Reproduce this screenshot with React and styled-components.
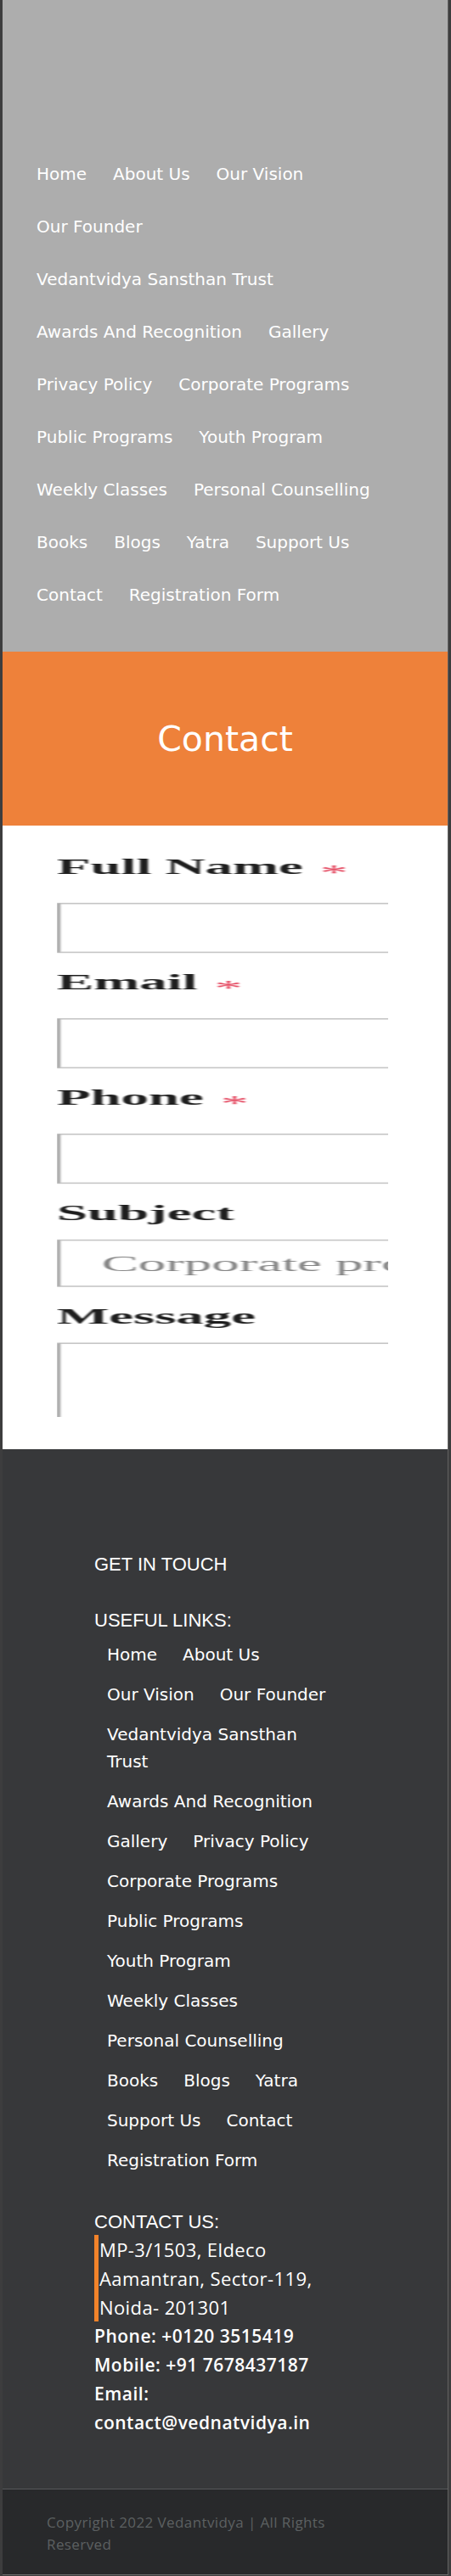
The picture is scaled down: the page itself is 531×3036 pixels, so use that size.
import styled, { createGlobalStyle } from 'styled-components';

const GlobalStyle = createGlobalStyle`
  html, body {
    margin: 0;
    padding: 0;
    background: #3d3d3e;
  }
  * {
    box-sizing: border-box;
  }
`;

const comic = `"DejaVu Sans", Verdana, sans-serif`;

const Page = styled.div`
  margin: 0 3px;
  border-right: 1px solid #626262;
  border-bottom: 1px solid #6c6c6c;
`;

const Header = styled.header`
  background: #adadad;
  padding: 189px 55px 51px 40px;
`;

const LinkList = styled.nav`
  display: flex;
  flex-wrap: wrap;
  column-gap: ${(p) => (p.$compact ? '30px' : '31px')};
  row-gap: ${(p) => (p.$compact ? '15px' : '30px')};
  padding-left: ${(p) => (p.$compact ? '15px' : '0')};
`;

const LinkItem = styled.a`
  font-family: ${comic};
  font-size: 20px;
  line-height: 32px;
  color: #fff;
  text-decoration: none;
`;

const Banner = styled.section`
  height: 205px;
  background: #ee813a;
  display: flex;
  align-items: center;
  justify-content: center;
`;

const BannerTitle = styled.h1`
  margin: 0;
  font-family: ${comic};
  font-weight: normal;
  font-size: 41px;
  color: #fff;
`;

const FormSection = styled.section`
  background: #fff;
  height: 735px;
  padding: 27px 0 0 64px;
`;

const FormClip = styled.div`
  width: 390px;
  height: 670px;
  overflow: hidden;
`;

const ScaledForm = styled.form`
  width: 200px;
  padding-top: 4px;
  transform: scale(4.05, 1.6);
  transform-origin: 0 0;
  filter: blur(0.35px);
`;

const Field = styled.div`
  margin-bottom: ${(p) => (p.$last ? '0' : '12.5px')};
`;

const Label = styled.label`
  display: block;
  font-family: "Liberation Serif", "Times New Roman", serif;
  font-weight: bold;
  font-size: 16px;
  line-height: 20px;
  color: #1e1e1e;
  margin-bottom: ${(p) => (p.$req ? '12px' : '8.5px')};
`;

const Req = styled.span`
  color: #e4465e;
  font-weight: normal;
  margin-left: 5px;
  vertical-align: -4px;
`;

const TextInput = styled.input`
  display: block;
  width: 160px;
  height: 36.5px;
  border: 1px solid #c6c6c6;
  border-left-color: #9e9e9e;
  background: #fff;
  padding: 0;
`;

const SelectBox = styled.div`
  width: 160px;
  height: 35px;
  border: 1px solid #c6c6c6;
  border-left-color: #9e9e9e;
  padding-left: 12px;
  font-family: "Liberation Serif", "Times New Roman", serif;
  font-size: 16px;
  line-height: 33px;
  color: #858585;
  white-space: nowrap;
  overflow: hidden;
`;

const TextArea = styled.textarea`
  display: block;
  width: 160px;
  height: 120px;
  border: 1px solid #c6c6c6;
  border-left-color: #9e9e9e;
  resize: none;
  padding: 0;
`;

const Footer = styled.footer`
  background: #37383a;
  padding: 123px 0 61px 108px;
`;

const Column = styled.div`
  width: 288px;
`;

const Heading = styled.h4`
  margin: 0;
  font-family: "Liberation Sans", Arial, sans-serif;
  font-weight: normal;
  font-size: 22px;
  line-height: 26px;
  color: #fff;
  margin-bottom: ${(p) => p.$space || '0'};
`;

const Block = styled.div`
  margin-top: ${(p) => p.$top || '0'};
`;

const Address = styled.p`
  margin: 2px 0 0;
  border-left: 5px solid #f2832a;
  padding-left: 1px;
  font-family: "Open Sans", sans-serif;
  font-weight: 500;
  font-size: 22px;
  letter-spacing: 0.4px;
  line-height: 34px;
  color: #fff;
`;

const InfoLine = styled.p`
  margin: 0;
  font-family: "Open Sans", sans-serif;
  font-weight: 600;
  font-size: 21px;
  letter-spacing: 0.5px;
  line-height: 34px;
  color: #fff;
`;

const BottomBar = styled.div`
  border-top: 1px solid #575859;
  background: #28292b;
  height: 101px;
  padding: 26px 0 0 52px;
`;

const Copyright = styled.p`
  margin: 0;
  max-width: 360px;
  font-family: "Open Sans", sans-serif;
  font-size: 17px;
  letter-spacing: 0.4px;
  line-height: 26px;
  color: #5c6061;
`;

const navLinks = [
  'Home',
  'About Us',
  'Our Vision',
  'Our Founder',
  'Vedantvidya Sansthan Trust',
  'Awards And Recognition',
  'Gallery',
  'Privacy Policy',
  'Corporate Programs',
  'Public Programs',
  'Youth Program',
  'Weekly Classes',
  'Personal Counselling',
  'Books',
  'Blogs',
  'Yatra',
  'Support Us',
  'Contact',
  'Registration Form',
];

function App() {
  return (
    <>
      <GlobalStyle />
      <Page>
        <Header>
          <LinkList>
            {navLinks.map((l) => (
              <LinkItem key={l} href="#">
                {l}
              </LinkItem>
            ))}
          </LinkList>
        </Header>

        <Banner>
          <BannerTitle>Contact</BannerTitle>
        </Banner>

        <FormSection>
          <FormClip>
            <ScaledForm onSubmit={(e) => e.preventDefault()}>
              <Field>
                <Label $req>
                  Full Name<Req>*</Req>
                </Label>
                <TextInput type="text" />
              </Field>
              <Field>
                <Label $req>
                  Email<Req>*</Req>
                </Label>
                <TextInput type="email" />
              </Field>
              <Field>
                <Label $req>
                  Phone<Req>*</Req>
                </Label>
                <TextInput type="tel" />
              </Field>
              <Field>
                <Label>Subject</Label>
                <SelectBox>Corporate programs</SelectBox>
              </Field>
              <Field $last>
                <Label>Message</Label>
                <TextArea />
              </Field>
            </ScaledForm>
          </FormClip>
        </FormSection>

        <Footer>
          <Column>
            <Heading $space="40px">GET IN TOUCH</Heading>
            <Heading $space="11px">USEFUL LINKS:</Heading>
            <LinkList $compact>
              {navLinks.map((l) => (
                <LinkItem key={l} href="#">
                  {l}
                </LinkItem>
              ))}
            </LinkList>
            <Block $top="44px">
              <Heading>CONTACT US:</Heading>
              <Address>MP-3/1503, Eldeco Aamantran, Sector-119, Noida- 201301</Address>
              <InfoLine>Phone: +0120 3515419</InfoLine>
              <InfoLine>Mobile: +91 7678437187</InfoLine>
              <InfoLine>Email: contact@vednatvidya.in</InfoLine>
            </Block>
          </Column>
        </Footer>

        <BottomBar>
          <Copyright>Copyright 2022 Vedantvidya | All Rights Reserved</Copyright>
        </BottomBar>
      </Page>
    </>
  );
}

export default App;
